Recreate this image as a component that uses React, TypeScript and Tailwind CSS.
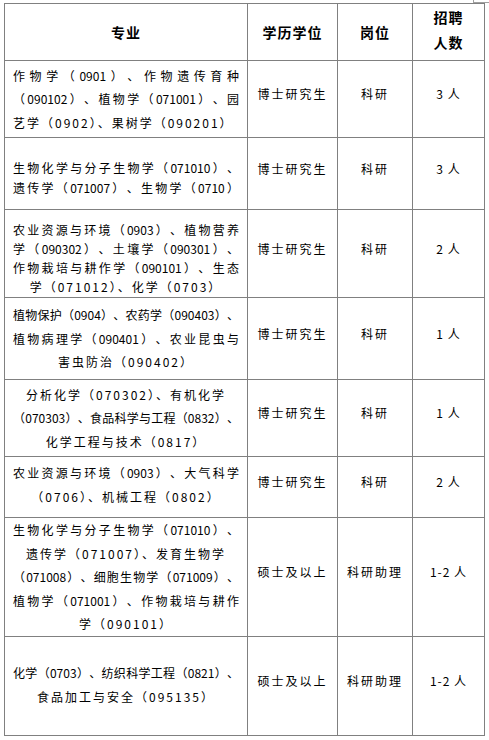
type Line = { text: string; align: "j" | "c" | "l" };

type Row = {
  lines: Line[];
  lineClass: string;
  leftClass?: string;
  degree: string;
  post: string;
  count: string;
};

const rows: Row[] = [
  {
    lines: [
      { text: "作物学（0901）、作物遗传育种", align: "j" },
      { text: "（090102）、植物学（071001）、园", align: "j" },
      { text: "艺学（0902）、果树学（090201）", align: "l" },
    ],
    lineClass: "leading-[23.5px]",
    degree: "博士研究生",
    post: "科研",
    count: "3 人",
  },
  {
    lines: [
      { text: "生物化学与分子生物学（071010）、", align: "j" },
      { text: "遗传学（071007）、生物学（0710）", align: "j" },
    ],
    lineClass: "leading-[20px]",
    leftClass: "pt-[8px]",
    degree: "博士研究生",
    post: "科研",
    count: "3 人",
  },
  {
    lines: [
      { text: "农业资源与环境（0903）、植物营养", align: "j" },
      { text: "学（090302）、土壤学（090301）、", align: "j" },
      { text: "作物栽培与耕作学（090101）、生态", align: "j" },
      { text: "学（071012）、化学（0703）", align: "c" },
    ],
    lineClass: "leading-[19px]",
    leftClass: "pt-[8px]",
    degree: "博士研究生",
    post: "科研",
    count: "2 人",
  },
  {
    lines: [
      { text: "植物保护（0904）、农药学（090403）、", align: "j" },
      { text: "植物病理学（090401）、农业昆虫与", align: "j" },
      { text: "害虫防治（090402）", align: "c" },
    ],
    lineClass: "leading-[23.5px]",
    degree: "博士研究生",
    post: "科研",
    count: "1 人",
  },
  {
    lines: [
      { text: "分析化学（070302）、有机化学", align: "c" },
      { text: "（070303）、食品科学与工程（0832）、", align: "j" },
      { text: "化学工程与技术（0817）", align: "c" },
    ],
    lineClass: "leading-[23.5px]",
    degree: "博士研究生",
    post: "科研",
    count: "1 人",
  },
  {
    lines: [
      { text: "农业资源与环境（0903）、大气科学", align: "j" },
      { text: "（0706）、机械工程（0802）", align: "c" },
    ],
    lineClass: "leading-[24px]",
    leftClass: "pb-[4px]",
    degree: "博士研究生",
    post: "科研",
    count: "2 人",
  },
  {
    lines: [
      { text: "生物化学与分子生物学（071010）、", align: "j" },
      { text: "遗传学（071007）、发育生物学", align: "c" },
      { text: "（071008）、细胞生物学（071009）、", align: "j" },
      { text: "植物学（071001）、作物栽培与耕作", align: "j" },
      { text: "学（090101）", align: "c" },
    ],
    lineClass: "leading-[23.5px]",
    degree: "硕士及以上",
    post: "科研助理",
    count: "1-2 人",
  },
  {
    lines: [
      { text: "化学（0703）、纺织科学工程（0821）、", align: "j" },
      { text: "食品加工与安全（095135）", align: "c" },
    ],
    lineClass: "leading-[24px]",
    leftClass: "pb-[2px]",
    degree: "硕士及以上",
    post: "科研助理",
    count: "1-2 人",
  },
];

// full lines stretch edge to edge, short ones sit in the middle
const alignClass = {
  j: "text-justify [text-align-last:justify] tracking-[0px] [text-spacing-trim:space-all]",
  c: "text-center tracking-[2px]",
  l: "text-left tracking-[2px]",
};

const cell = "border-r border-b border-[#808080] flex flex-col justify-center";

export default function App() {
  return (
    <div
      className="relative w-[489px] h-[740px] bg-white pl-[4px] pt-[3px] text-black"
      style={{ fontFamily: '"Noto Sans CJK SC", "Liberation Sans", sans-serif' }}
    >
      <span className="absolute left-[473px] top-0 w-[16px] h-[3px] border-l border-b border-[#a0a0a0]" />
      <div className="grid w-[481px] grid-cols-[243px_90px_75px_72px] grid-rows-[57px_77px_72px_88px_82px_77px_61px_119px_99px] border-l border-t border-[#808080]">
        <div className={`${cell} items-center text-[14px] font-bold tracking-[1px]`}>专业</div>
        <div className={`${cell} items-center text-[14px] font-bold tracking-[1px]`}>学历学位</div>
        <div className={`${cell} items-center text-[14px] font-bold tracking-[1px]`}>岗位</div>
        <div className={`${cell} items-center text-[14px] font-bold tracking-[1px] leading-[25px] pb-[4px]`}>
          <span>招聘</span>
          <span>人数</span>
        </div>

        {rows.map((row, i) => (
          <Cells key={i} row={row} />
        ))}
      </div>
    </div>
  );
}

function Cells({ row }: { row: Row }) {
  return (
    <>
      <div className={`${cell} px-[8px] text-[12px] ${row.lineClass} ${row.leftClass ?? ""}`}>
        {row.lines.map((line) => (
          <div key={line.text} className={alignClass[line.align]}>
            {line.text}
          </div>
        ))}
      </div>
      <div className={`${cell} items-center pb-[10px] text-[12px] tracking-[2px]`}>{row.degree}</div>
      <div className={`${cell} items-center pb-[10px] text-[12px] tracking-[2px]`}>{row.post}</div>
      <div className={`${cell} items-center pb-[10px] text-[12px] tracking-[1px] whitespace-pre`}>
        {row.count}
      </div>
    </>
  );
}
